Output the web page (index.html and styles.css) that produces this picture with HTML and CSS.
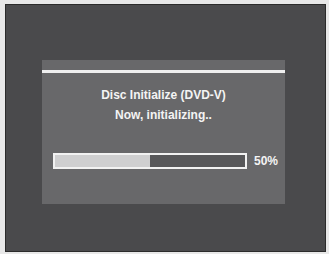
FILE: index.html
```html
<!DOCTYPE html>
<html>
<head>
<meta charset="utf-8">
<link rel="stylesheet" href="styles.css">
</head>
<body>
<div class="frame">
  <div class="panel">
    <div class="rule"></div>
    <div class="title">Disc Initialize (DVD-V)</div>
    <div class="sub">Now, initializing..</div>
    <div class="progress">
      <div class="bar"><div class="fill" style="width:50%"></div></div>
      <span class="pct">50%</span>
    </div>
  </div>
</div>
</body>
</html>
```
FILE: styles.css
```css
html, body {
  margin: 0;
  padding: 0;
  background: #e8e8e8;
  width: 329px;
  height: 254px;
  overflow: hidden;
}
.frame {
  box-sizing: border-box;
  margin: 4px 3px 0 5px;
  width: 321px;
  height: 248px;
  background: #4a4a4c;
  border: 1px solid #2b2b2b;
  padding: 55px 0 0 36px;
}
.panel {
  box-sizing: border-box;
  width: 243px;
  height: 144px;
  background: #68686a;
  padding-top: 10px;
  font-family: "Liberation Sans", Arial, sans-serif;
  font-weight: bold;
  color: #f4f4f4;
  font-size: 12px;
}
.rule {
  height: 3px;
  background: #efefef;
}
.title {
  text-align: center;
  margin-top: 12px;
  line-height: 20px;
}
.sub {
  text-align: center;
  line-height: 20px;
}
.progress {
  display: flex;
  align-items: center;
  margin-top: 28px;
  padding-left: 11px;
}
.bar {
  box-sizing: border-box;
  width: 194px;
  height: 16px;
  border: 2px solid #f2f2f2;
  background: #58585a;
}
.fill {
  height: 100%;
  background: #cfcfd0;
}
.pct {
  margin-left: 7px;
}
```
